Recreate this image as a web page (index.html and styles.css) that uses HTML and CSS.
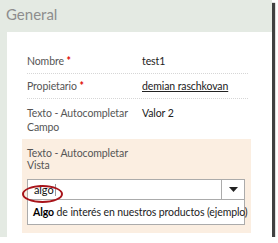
FILE: index.html
```html
<!DOCTYPE html>
<html lang="es">

<head>
  <meta charset="UTF-8">
  <title>General</title>
  <link rel="stylesheet" href="styles.css">
</head>

<body>
  <div class="shot">
    <div class="section-title">General</div>

    <div class="panel">
      <div class="row">
        <div class="label">Nombre <span class="req">*</span></div>
        <div class="value">test1</div>
      </div>
      <div class="row">
        <div class="label">Propietario <span class="req">*</span></div>
        <div class="value"><a class="link" href="#">demian raschkovan</a></div>
      </div>
      <div class="row last">
        <div class="label">Texto - Autocompletar Campo</div>
        <div class="value">Valor 2</div>
      </div>

      <div class="edit">
        <div class="edit-label">Texto - Autocompletar<br>Vista</div>
        <div class="combo">
          <div class="combo-input">algo<span class="caret"></span></div>
          <div class="combo-btn">
            <svg width="9" height="5" viewBox="0 0 9 5"><polygon points="0,0 9,0 4.5,5" fill="#222"/></svg>
          </div>
        </div>
        <div class="suggest"><b>Algo</b> de interés en nuestros productos (ejemplo)</div>
        <div class="mark"></div>
      </div>
    </div>
  </div>
</body>

</html>
```

FILE: styles.css
```css
body {
  margin: 0;
  background: #ffffff;
  font-family: Lato, "Open Sans", sans-serif;
  font-size: 10.5px;
  letter-spacing: -0.1px;
  color: #444;
}

.shot {
  width: 272px;
  height: 237px;
  background: #e4eae3;
  box-shadow: 3px 3px 1px rgba(0, 0, 0, 0.75);
  display: flex;
  flex-direction: column;
}

.section-title {
  height: 32px;
  padding-left: 6px;
  line-height: 28px;
  font-size: 15px;
  letter-spacing: 0;
  color: #8d8d8d;
}

.panel {
  flex: 1;
  margin-left: 7px;
  background: #fff;
  padding: 17px 21px 0 15px;
}

.row {
  display: flex;
  margin: 0 3px 0 5px;
  padding: 5px 0;
  line-height: 14px;
  border-bottom: 1px dotted #d6d6d6;
}

.row.last {
  border-bottom: none;
  padding: 7px 0 5px;
}

.label {
  width: 115px;
  color: #555;
}

.req {
  color: #e00000;
  font-weight: bold;
}

.value {
  color: #222;
}

.link {
  color: #222;
}

.edit {
  position: relative;
  background: #fbeee1;
  padding: 8px 6px 8px 5px;
}

.edit-label {
  line-height: 12px;
  color: #555;
  margin-bottom: 8px;
}

.combo {
  display: flex;
  height: 19px;
  border: 1px solid #ababab;
  background: #fff;
}

.combo-input {
  flex: 1;
  padding-left: 6px;
  line-height: 20px;
  font-size: 11px;
  color: #111;
}

.caret {
  display: inline-block;
  width: 1px;
  height: 12px;
  margin-left: 1px;
  vertical-align: -2px;
  background: #999;
}

.combo-btn {
  width: 22px;
  border-left: 1px solid #ababab;
  display: flex;
  align-items: center;
  justify-content: center;
}

.suggest {
  height: 24px;
  line-height: 24px;
  padding-left: 5px;
  border: 1px solid #ababab;
  border-top: none;
  background: #fff;
  color: #222;
  white-space: nowrap;
}

.suggest b {
  color: #000;
}

/* red annotation ring around the typed text */
.mark {
  position: absolute;
  left: 0;
  top: 46px;
  width: 37px;
  height: 14px;
  border: 2px solid #a8141a;
  border-radius: 50%;
}
```
